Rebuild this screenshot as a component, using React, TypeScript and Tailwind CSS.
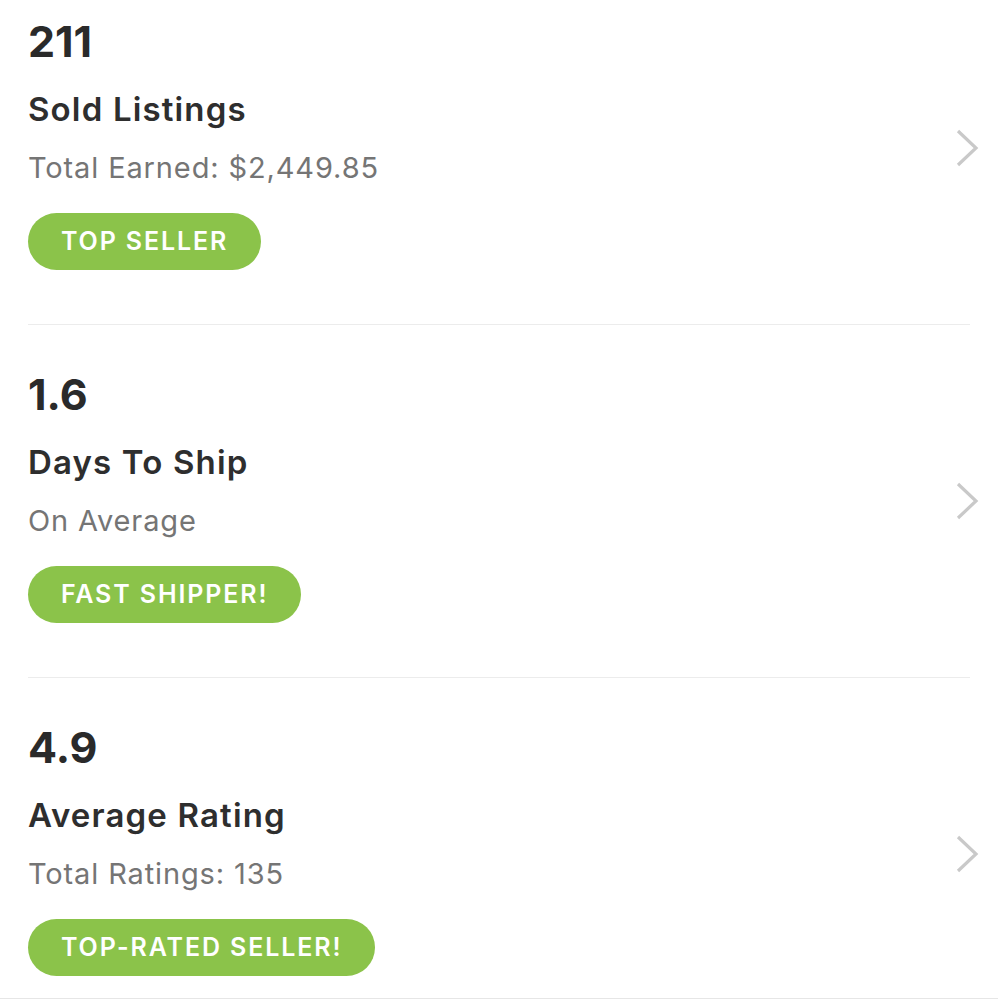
import React from "react";

type Item = { value: string; title: string; sub: string; badge: string };

const items: Item[] = [
  { value: "211", title: "Sold Listings", sub: "Total Earned: $2,449.85", badge: "TOP SELLER" },
  { value: "1.6", title: "Days To Ship", sub: "On Average", badge: "FAST SHIPPER!" },
  { value: "4.9", title: "Average Rating", sub: "Total Ratings: 135", badge: "TOP-RATED SELLER!" },
];

function Chevron() {
  return (
    <svg width="26" height="40" viewBox="0 0 26 40" fill="none">
      <polyline points="4,3 22,20 4,37" stroke="#c9c9c9" strokeWidth="3.2" strokeLinecap="butt" strokeLinejoin="miter" />
    </svg>
  );
}

function Section({ item }: { item: Item }) {
  return (
    <div className="mx-[28px] h-[353px] shrink-0 border-b border-[#ececec] flex items-center justify-between">
      <div className="flex flex-col items-start self-start pt-[45px]">
        <div className="text-[43px] leading-[48px] font-bold tracking-[0em] text-[#2a2a2a]">{item.value}</div>
        <div className="mt-[26px] text-[33px] leading-[36px] font-semibold tracking-[0.035em] text-[#2e2e2e]">{item.title}</div>
        <div className="mt-[24px] text-[29px] leading-[34px] tracking-[0.03em] text-[#757575]">{item.sub}</div>
        <div className="mt-[28px] h-[57px] rounded-full bg-[#8bc34a] px-[33px] flex items-center text-[25px] font-semibold tracking-[0.075em] text-white">
          {item.badge}
        </div>
      </div>
      <div className="mr-[-10px]">
        <Chevron />
      </div>
    </div>
  );
}

export default function App() {
  return (
    <div className="w-[998px] h-[1000px] bg-white overflow-hidden flex flex-col font-['Inter',sans-serif]">
      <div className="flex-1 overflow-hidden">
        <div className="mt-[-28px] flex flex-col">
          {items.map((it) => (
            <Section key={it.value} item={it} />
          ))}
        </div>
      </div>
      <div className="h-[2px] shrink-0 border-t border-[#e6e6e6] bg-white" />
    </div>
  );
}
